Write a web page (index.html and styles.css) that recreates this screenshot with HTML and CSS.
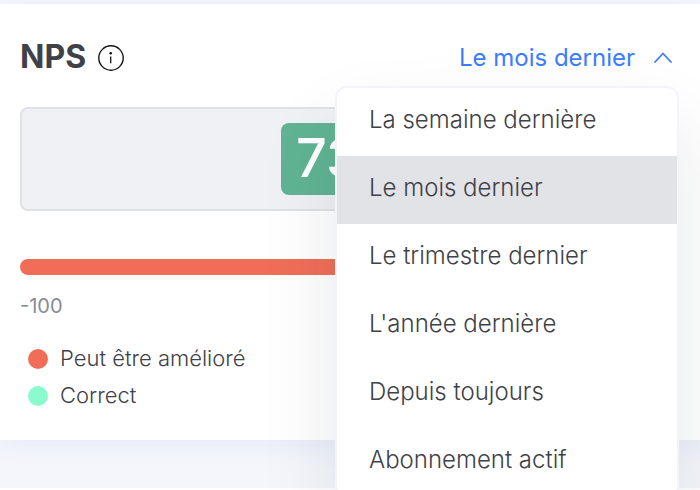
FILE: index.html
```html
<!DOCTYPE html>
<html lang="fr">
<head>
<meta charset="utf-8">
<meta name="viewport" content="width=device-width, initial-scale=1">
<title>NPS</title>
<link rel="stylesheet" href="styles.css">
</head>
<body>
<main class="page">
  <section class="card">
    <header class="card-header">
      <h1 class="title">NPS</h1>
      <button class="info" type="button" aria-label="Informations">
        <svg width="26" height="26" viewBox="0 0 26 26" fill="none" stroke="#141417">
          <circle cx="13" cy="13" r="12.2" stroke-width="1.4"/>
          <path d="M12.700 11.600v6.600" stroke-width="1.300"/>
          <circle cx="12.700" cy="8.200" r="1.300" fill="#141417" stroke="none"/>
        </svg>
      </button>
      <div class="period">
        <button class="period-toggle" type="button" aria-haspopup="true" aria-expanded="true">
          Le mois dernier
          <svg width="18" height="12" viewBox="0 0 18 12" fill="none" stroke="currentColor" stroke-width="1.8" stroke-linecap="round" stroke-linejoin="round">
            <path d="M1 10L9 1.500l8 8.500"/>
          </svg>
        </button>
        <ul class="menu">
          <li><button class="option" type="button">La semaine dernière</button></li>
          <li><button class="option selected" type="button">Le mois dernier</button></li>
          <li><button class="option" type="button">Le trimestre dernier</button></li>
          <li><button class="option" type="button">L'année dernière</button></li>
          <li><button class="option" type="button">Depuis toujours</button></li>
          <li><button class="option" type="button">Abonnement actif</button></li>
        </ul>
      </div>
    </header>
    <div class="score"><span class="score-value">73</span></div>
    <div class="scale"></div>
    <div class="scale-min">-100</div>
    <ul class="legend">
      <li class="legend-item"><span class="dot poor"></span>Peut être amélioré</li>
      <li class="legend-item"><span class="dot fair"></span>Correct</li>
    </ul>
  </section>
  <section class="card next"></section>
</main>
</body>
</html>
```
FILE: styles.css
```css
* {
  box-sizing: border-box;
}

body {
  margin: 0;
  background: #f4f6fb;
  color: #404147;
  font-family: Inter, "Liberation Sans", sans-serif;
  font-weight: 300;
}

button {
  margin: 0;
  padding: 0;
  border: 0;
  background: none;
  font: inherit;
  color: inherit;
  cursor: pointer;
}

ul {
  margin: 0;
  padding: 0;
  list-style: none;
}

.page {
  display: flex;
  flex-direction: column;
  gap: 48px;
  height: 100vh;
  padding-top: 4px;
  overflow: hidden;
}

.card {
  flex: none;
  padding: 32px 28px 30px 20px;
  background: #fff;
  box-shadow: 0 4px 24px rgba(70, 100, 220, 0.08);
}

.next {
  flex: 1;
  padding: 0;
  box-shadow: none;
}

.card-header {
  display: flex;
  align-items: center;
  height: 42px;
  margin-bottom: 29px;
}

.title {
  margin: 0 12px 0 0;
  font-size: 32px;
  line-height: 42px;
  font-weight: 700;
}

.info {
  display: flex;
  padding-top: 2px;
}

.period {
  position: relative;
  margin-left: auto;
}

.period-toggle {
  display: flex;
  align-items: center;
  gap: 19px;
  padding-top: 2px;
  font-size: 24px;
  line-height: 42px;
  font-weight: 400;
  color: #3b7dff;
}

.menu {
  position: absolute;
  z-index: 2;
  top: 51px;
  right: -7px;
  width: 344px;
  border: 2px solid #f3f3fa;
  border-radius: 12px;
  background: #fff;
  box-shadow: 0 40px 80px rgba(20, 25, 45, 0.1);
  overflow: hidden;
}

.option {
  display: block;
  width: 100%;
  padding: 0 32px 4px;
  font-size: 24px;
  line-height: 64px;
  text-align: left;
}

.selected {
  background: #e2e3e7;
}

.score {
  display: flex;
  justify-content: center;
  padding: 14px;
  border: 2px solid #e0e1e5;
  border-radius: 8px;
  background: #f0f1f4;
}

.score-value {
  min-width: 130px;
  padding: 0 15px 2px;
  border-radius: 8px;
  background: #60b493;
  color: #fff;
  font-size: 54px;
  line-height: 70px;
  font-weight: 500;
}

.scale {
  height: 16px;
  margin-top: 48px;
  border-radius: 8px;
  background: #f06e58;
}

.scale-min {
  margin-top: 16px;
  font-size: 20px;
  line-height: 30px;
  font-weight: 400;
  color: #888b95;
}

.legend {
  display: grid;
  gap: 7px;
  margin-top: 22px;
  padding-left: 8px;
}

.legend-item {
  display: flex;
  align-items: center;
  gap: 12px;
  font-size: 22px;
  line-height: 30px;
}

.dot {
  width: 20px;
  height: 20px;
  margin-top: 2px;
  border-radius: 50%;
}

.poor {
  background: #f06e58;
}

.fair {
  background: #8bfacd;
}
```
